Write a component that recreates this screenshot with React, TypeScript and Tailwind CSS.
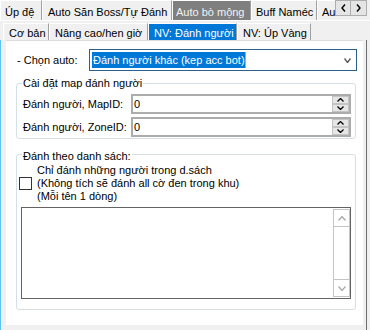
import type { ReactNode } from 'react';

function Chevron({ up, className, stroke, w = 8, h = 5, sw = 1.2 }: { up?: boolean; className?: string; stroke: string; w?: number; h?: number; sw?: number }) {
  const pts = up ? `0.5,${h - 0.5} ${w / 2},0.5 ${w - 0.5},${h - 0.5}` : `0.5,0.5 ${w / 2},${h - 0.5} ${w - 0.5},0.5`;
  return (
    <svg width={w} height={h} viewBox={`0 0 ${w} ${h}`} className={className}>
      <polyline points={pts} fill="none" stroke={stroke} strokeWidth={sw} />
    </svg>
  );
}

function TopTab({ children, className }: { children: ReactNode; className: string }) {
  return (
    <div className={`h-[20px] pt-[5px] shrink-0 overflow-hidden whitespace-nowrap border-l border-t border-l-white border-t-white border-r border-r-[#a0a0a0] ${className}`}>
      {children}
    </div>
  );
}

function SubTab({ children, className }: { children: ReactNode; className: string }) {
  return (
    <div className={`h-[17px] pt-[3px] shrink-0 whitespace-nowrap border-l border-t border-l-white border-t-white border-r border-r-[#a0a0a0] ${className}`}>
      {children}
    </div>
  );
}

function NumBox() {
  return (
    <div className="w-[220px] h-[20px] border-2 border-[#acacac] bg-white flex items-center">
      <span className="pl-[1px] flex-1">0</span>
      <div className="w-[17px] h-full flex flex-col">
        <div className="flex-1 bg-[#e6e6e6] border border-[#c4c4c4] flex items-center justify-center">
          <Chevron up stroke="#000" w={7} h={4} sw={1.3} />
        </div>
        <div className="flex-1 bg-[#e6e6e6] border border-[#c4c4c4] flex items-center justify-center">
          <Chevron stroke="#000" w={7} h={4} sw={1.3} />
        </div>
      </div>
    </div>
  );
}

export default function App() {
  return (
    <div className="w-[370px] h-[330px] bg-[#f0f0f0] flex flex-col overflow-hidden font-['Liberation_Sans',Arial,sans-serif] text-[11px] leading-[13px] text-black">
      {/* outer tab strip */}
      <div className="h-[20px] flex shrink-0">
        <TopTab className="w-[42px] pl-[4px] bg-[#f0f0f0]">Úp đệ</TopTab>
        <TopTab className="w-[130px] pl-[5px] bg-[#f0f0f0]">Auto Săn Boss/Tự Đánh</TopTab>
        <TopTab className="w-[79px] pl-[3px] bg-[#7f7f7f] text-[#f2f2f2]">Auto bò mộng</TopTab>
        <TopTab className="w-[66px] pl-[4px] bg-[#f0f0f0]">Buff Naméc</TopTab>
        <TopTab className="w-[18px] pl-[4px] bg-[#f0f0f0] border-r-0">Au</TopTab>
        <div className="h-[16px] flex">
          <div className="w-[16px] h-[16px] bg-[#e5e5e5] border border-[#adadad] flex items-center justify-center">
            <svg width="5" height="8" viewBox="0 0 5 8"><polyline points="4,0.5 1,4 4,7.5" fill="none" stroke="#000" strokeWidth="1.4" /></svg>
          </div>
          <div className="w-[16px] h-[16px] bg-[#e5e5e5] border border-l-0 border-[#adadad] flex items-center justify-center">
            <svg width="5" height="8" viewBox="0 0 5 8"><polyline points="1,0.5 4,4 1,7.5" fill="none" stroke="#000" strokeWidth="1.4" /></svg>
          </div>
        </div>
      </div>
      <div className="h-[3px] border-t border-white shrink-0" />

      {/* inner tab strip */}
      <div className="h-[17px] flex pl-[3px] shrink-0">
        <SubTab className="w-[46px] pl-[5px] bg-[#f0f0f0]">Cơ bản</SubTab>
        <SubTab className="w-[99px] pl-[5px] bg-[#f0f0f0]">Nâng cao/hen giờ</SubTab>
        <SubTab className="w-[89px] pl-[5px] bg-[#0078d7] text-white border-0">NV: Đánh người</SubTab>
        <SubTab className="w-[74px] pl-[5px] bg-[#f0f0f0]">NV: Úp Vàng</SubTab>
      </div>

      <div className="flex-1 flex">
        <div className="w-[1px] bg-[#5cc6f2]" />
        <div className="w-[5px]" />

        {/* page */}
        <div className="w-[357px] h-[285px] bg-white border-t border-[#dcdcdc] flex flex-col">
          <div className="mt-[8px] h-[22px] flex items-center">
            <span className="pl-[11px] w-[83px] shrink-0">- Chọn auto:</span>
            <div className="w-[268px] h-[22px] border border-[#2d5f8b] flex items-center pl-[2px] pr-[5px]">
              <span className="bg-[#0078d7] text-white h-[16px] leading-[16px] pl-[1px] border-r border-r-[#e89a5a]">Đánh người khác (kep acc bot)</span>
              <Chevron className="ml-auto" stroke="#5a5a5a" w={7} h={5} sw={1.4} />
            </div>
          </div>

          {/* group 1 */}
          <div className="mt-[12px] ml-[10px] w-[340px] h-[56px] border border-[#d5dfe5] rounded-[3px] relative pt-[10px] pl-[6px]">
            <span className="absolute left-[5px] top-[-7px] bg-white px-[1px]">Cài đặt map đánh người</span>
            <div className="h-[20px] flex items-center">
              <span className="w-[108px] pt-[1px]">Đánh người, MapID:</span>
              <NumBox />
            </div>
            <div className="h-[20px] mt-[3px] flex items-center">
              <span className="w-[108px] pt-[1px]">Đánh người, ZoneID:</span>
              <NumBox />
            </div>
          </div>

          {/* group 2 */}
          <div className="mt-[15px] ml-[10px] w-[340px] h-[156px] border border-[#d5dfe5] rounded-[3px] relative pt-[9px] pl-[2px]">
            <span className="absolute left-[5px] top-[-5px] bg-white px-[1px]">Đánh theo danh sách:</span>
            <div className="flex items-center">
              <div className="w-[13px] h-[13px] border border-[#333333] bg-white shrink-0" />
              <div className="ml-[5px]">
                <div>Chỉ đánh những người trong d.sách</div>
                <div>(Không tích sẽ đánh all cờ đen trong khu)</div>
                <div>(Mỗi tên 1 dòng)</div>
              </div>
            </div>
            <div className="mt-[4px] ml-[2px] w-[330px] h-[92px] border border-[#646464] bg-white flex justify-end">
              <div className="w-[17px] my-[1px] border-x border-[#c4c4c4] flex flex-col justify-between">
                <div className="h-[18px] border-y border-[#c4c4c4] flex items-center justify-center">
                  <Chevron up stroke="#a6a6a6" w={8} h={5} sw={1.2} />
                </div>
                <div className="h-[18px] border-y border-[#c4c4c4] flex items-center justify-center">
                  <Chevron stroke="#a6a6a6" w={8} h={5} sw={1.2} />
                </div>
              </div>
            </div>
          </div>
        </div>

        <div className="w-[3px]" />
        <div className="w-[1px] bg-[#6e6e6e]" />
      </div>
    </div>
  );
}
